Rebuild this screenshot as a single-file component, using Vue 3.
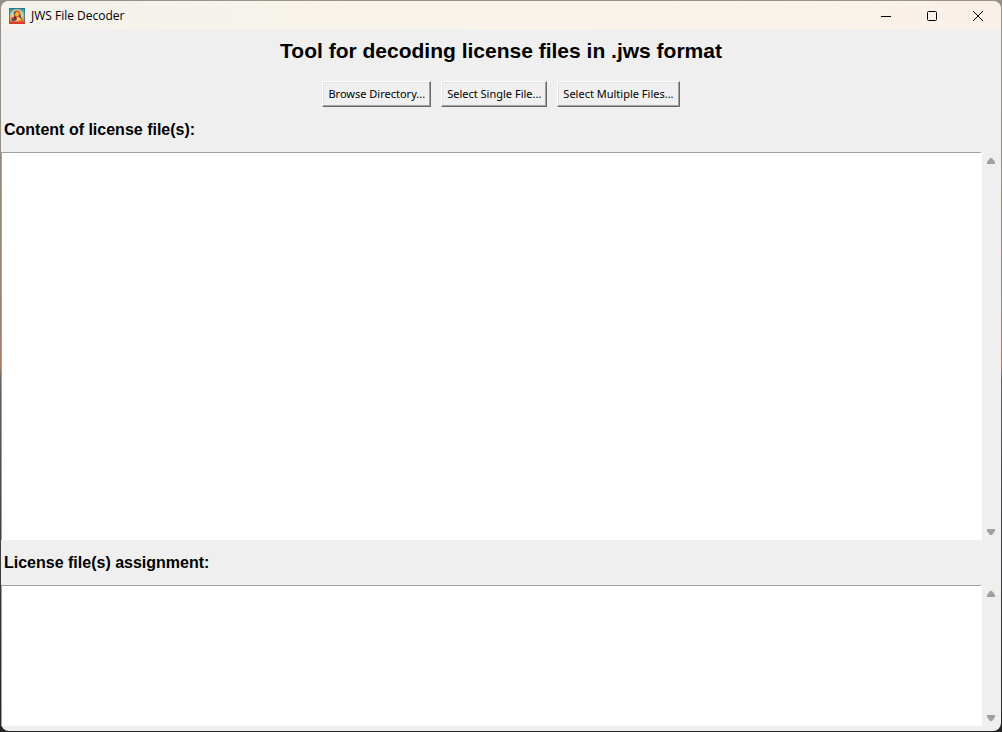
<script setup>
const actions = ['Browse Directory...', 'Select Single File...', 'Select Multiple Files...']
const panes = [
  { id: 'content', label: 'Content of license file(s):' },
  { id: 'assignment', label: 'License file(s) assignment:' },
]
</script>

<template>
  <div class="desktop">
    <div class="window">
      <header class="titlebar">
        <svg class="app-icon" viewBox="0 0 16 16" aria-hidden="true">
          <defs>
            <linearGradient id="sky" x1="0" y1="0" x2="0" y2="1">
              <stop offset="0" stop-color="#2583a0" />
              <stop offset="0.4" stop-color="#8fc4a0" />
              <stop offset="0.65" stop-color="#f0a04a" />
              <stop offset="1" stop-color="#d9402c" />
            </linearGradient>
            <radialGradient id="glow">
              <stop offset="0" stop-color="#ffe889" />
              <stop offset="0.7" stop-color="#f5dc8c" stop-opacity="0.8" />
              <stop offset="1" stop-color="#f5dc8c" stop-opacity="0" />
            </radialGradient>
          </defs>
          <rect width="16" height="16" fill="url(#sky)" />
          <circle cx="8" cy="7" r="7" fill="url(#glow)" />
          <circle cx="8" cy="6" r="3.5" fill="#e0552f" />
          <ellipse cx="5" cy="11" rx="2.6" ry="2.2" fill="#d23c3a" />
          <ellipse cx="11" cy="11" rx="2.6" ry="2.2" fill="#e0672f" />
          <path d="M5 4l2-1v2L5 7zM11 6l1 2v2l-2-1zM3 11l3 0-1 2H3z" fill="#245d78" />
          <circle cx="8" cy="6" r="2" fill="#f3bd30" />
          <path d="M8 9l3 1 1 2-4 1z" fill="#f8d64a" />
          <path d="M5 8l2 1 1 2-1 1-2-2z" fill="#5e2740" />
          <path d="M0 14h16v2H0z" fill="#d83a2b" />
          <path d="M.5 14V.5h15V14" fill="none" stroke="#276f8c" stroke-opacity="0.7" />
        </svg>
        <span class="caption">JWS File Decoder</span>
        <button class="control" aria-label="Minimize">
          <svg viewBox="0 0 12 12"><path d="M1 6.5h10" /></svg>
        </button>
        <button class="control" aria-label="Maximize">
          <svg viewBox="0 0 12 12"><rect x="1.5" y="1.5" width="9" height="9" rx="1" /></svg>
        </button>
        <button class="control" aria-label="Close">
          <svg viewBox="0 0 12 12"><path d="M1 1l10 10M11 1L1 11" /></svg>
        </button>
      </header>

      <main class="client">
        <h1>Tool for decoding license files in .jws format</h1>
        <div class="actions">
          <button v-for="action in actions" :key="action" class="action">{{ action }}</button>
        </div>
        <section v-for="pane in panes" :key="pane.id" class="pane" :class="pane.id">
          <label :for="pane.id">{{ pane.label }}</label>
          <div class="editor">
            <textarea :id="pane.id" spellcheck="false"></textarea>
            <div class="scrollbar">
              <button aria-label="Scroll up">
                <svg viewBox="0 0 8 6"><path d="M3 0h2l3 4v2H0V4z" /></svg>
              </button>
              <button aria-label="Scroll down">
                <svg viewBox="0 0 8 6"><path d="M0 0h8v2L5 6H3L0 2z" /></svg>
              </button>
            </div>
          </div>
        </section>
      </main>
    </div>
  </div>
</template>

<style>
body {
  margin: 0;
}
</style>

<style scoped>
.desktop {
  box-sizing: border-box;
  height: 100vh;
  padding: 1px;
  background: linear-gradient(#96928a 0%, #96877a 40%, #a77c63 50%, #67606a 52%, #45434a 70%, #242426 100%);
}
.window {
  display: flex;
  flex-direction: column;
  height: 100%;
  border-radius: 8px;
  overflow: hidden;
  background: #efefef;
  color: #000;
}
.titlebar {
  display: flex;
  align-items: center;
  height: 29px;
  padding-left: 8px;
  background: linear-gradient(90deg, #f3f2ec, #f9f3ea 50%, #f9f1e9);
}
.app-icon {
  width: 16px;
  height: 16px;
}
.caption {
  flex: 1;
  margin-left: 6px;
  font: 12px/16px "Segoe UI", "Open Sans", sans-serif;
}
.control {
  display: flex;
  align-items: center;
  justify-content: center;
  width: 46px;
  height: 29px;
  padding: 0;
  border: 0;
  background: none;
}
.control svg {
  width: 12px;
  height: 12px;
  fill: none;
  stroke: #000;
}
.client {
  display: flex;
  flex: 1;
  flex-direction: column;
  min-height: 0;
  padding-bottom: 5px;
}
h1 {
  margin: 9px 0 0;
  font: bold 21px/24px "Liberation Sans", Arial, sans-serif;
  text-align: center;
}
.actions {
  display: flex;
  justify-content: center;
  gap: 10px;
  margin-top: 18px;
}
.action {
  box-sizing: border-box;
  height: 26px;
  padding: 0 5px;
  border: 1px solid;
  border-color: #fff #696969 #696969 #fff;
  box-shadow: inset -1px -1px #a0a0a0, inset 1px 1px #e3e3e3;
  background: #f0f0f0;
  color: #000;
  font: 11px/16px "Noto Sans", "Segoe UI", sans-serif;
}
.pane {
  display: flex;
  flex-direction: column;
  min-height: 0;
}
.content {
  flex: 433 1 0;
}
.assignment {
  flex: 186 1 0;
}
label {
  padding: 14px 3px 13px;
  font: bold 16px/18px "Liberation Sans", Arial, sans-serif;
}
.editor {
  display: flex;
  flex: 1;
  min-height: 0;
}
textarea {
  box-sizing: border-box;
  flex: 1;
  min-width: 0;
  padding: 2px;
  border: 0 solid;
  border-width: 1px 2px 0 1px;
  border-color: #a0a0a0 #fff #fff #a0a0a0;
  outline: 0;
  resize: none;
  background: #fff;
  font: 13px/16px "Liberation Mono", monospace;
}
.scrollbar {
  display: flex;
  flex-direction: column;
  justify-content: space-between;
  box-sizing: border-box;
  width: 19px;
  padding-right: 1px;
}
.scrollbar button {
  display: flex;
  align-items: center;
  justify-content: center;
  height: 17px;
  padding: 0;
  border: 0;
  background: none;
}
.scrollbar svg {
  width: 8px;
  height: 6px;
  fill: #a0a0a0;
}
</style>
